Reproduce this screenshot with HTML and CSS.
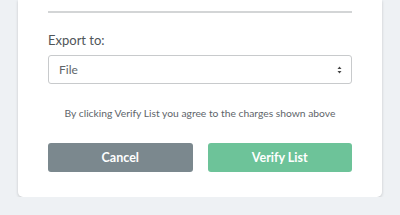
FILE: index.html
```html
<!DOCTYPE html>
<html lang="en">
<head>
    <meta charset="UTF-8">
    <meta name="viewport" content="width=device-width, initial-scale=1.0">
    <title>Verify List</title>
    <link rel="stylesheet" href="styles.css">
</head>
<body>
    <div class="card">
        <hr class="divider">

        <label class="field-label" for="exportTo">Export to:</label>
        <div class="select-wrap">
            <select id="exportTo" class="select">
                <option>File</option>
            </select>
            <svg class="select-arrows" width="5" height="8" viewBox="0 0 5 8">
                <path d="M2.5 0.5 L4.5 3 H0.5 Z" fill="#444"/>
                <path d="M2.5 7.5 L4.5 5 H0.5 Z" fill="#444"/>
            </svg>
        </div>

        <p class="notice">By clicking Verify List you agree to the charges shown above</p>

        <div class="actions">
            <button class="btn btn-cancel">Cancel</button>
            <button class="btn btn-verify">Verify List</button>
        </div>
    </div>
</body>
</html>
```

FILE: styles.css
```css
body {
    margin: 0;
    background-color: #eef1f4;
    font-family: Lato, "Open Sans", sans-serif;
}
.card {
    margin: 0 18px;
    padding: 11px 30px 25px;
    background-color: #ffffff;
    border-radius: 0 0 5px 5px;
    box-shadow: 0 1px 3px rgba(0, 0, 0, 0.18);
}
.divider {
    margin: 0;
    border: none;
    border-top: 2px solid #d3d5d6;
}
.field-label {
    display: block;
    margin-top: 18px;
    font-size: 13px;
    line-height: 18px;
    color: #505558;
}
.select-wrap {
    position: relative;
    margin-top: 6px;
}
.select {
    display: block;
    width: 100%;
    height: 29px;
    padding: 0 10px;
    border: 1px solid #c8cacc;
    border-radius: 3px;
    background-color: #ffffff;
    font-family: inherit;
    font-size: 12px;
    color: #606569;
    -webkit-appearance: none;
    appearance: none;
}
.select-arrows {
    position: absolute;
    right: 10px;
    top: 11px;
}
.notice {
    margin: 22px 0 0;
    text-align: center;
    font-size: 10.3px;
    line-height: 14px;
    color: #60656a;
}
.actions {
    display: flex;
    gap: 15px;
    margin-top: 23px;
}
.btn {
    flex: 1;
    height: 29px;
    border: none;
    border-radius: 3px;
    font-family: inherit;
    font-size: 12.5px;
    font-weight: bold;
    color: #ffffff;
    cursor: pointer;
}
.btn-cancel {
    background-color: #7b888e;
}
.btn-verify {
    background-color: #6dc399;
}
```
